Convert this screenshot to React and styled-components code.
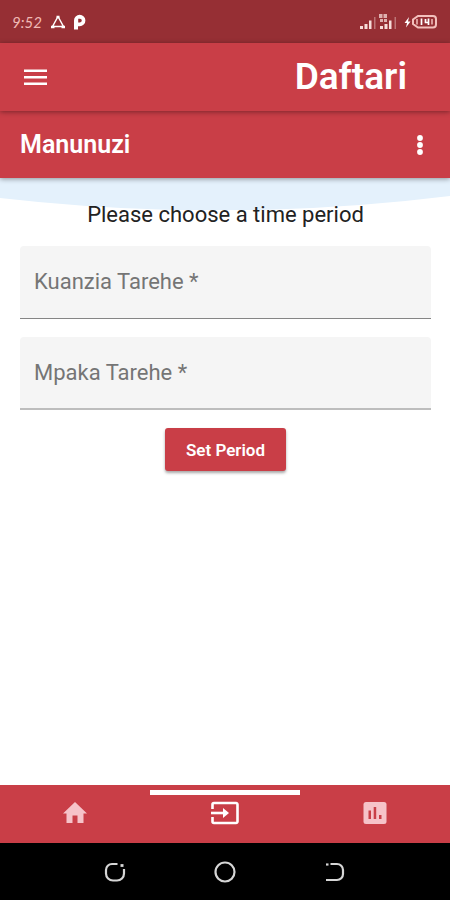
import React, { useState } from "react";
import styled, { createGlobalStyle } from "styled-components";

const GlobalStyle = createGlobalStyle`
* {
  box-sizing: border-box;
}
body {
  margin: 0;
  background: #fff;
  font-family: Roboto, sans-serif;
}
button {
  font-family: inherit;
  border: none;
  padding: 0;
  cursor: pointer;
}
`;

const Screen = styled.div`
  display: flex;
  flex-direction: column;
  min-height: 100vh;
`;

const StatusBar = styled.div`
  display: flex;
  align-items: center;
  justify-content: space-between;
  height: 43px;
  padding: 0 12px;
  background: #962f34;
  color: #f0b9b4;
`;

const StatusGroup = styled.div`
  display: flex;
  align-items: center;
  gap: ${(props) => props.$gap}px;
`;

const Clock = styled.span`
  font-family: Lato, sans-serif;
  font-style: italic;
  font-size: 15px;
  line-height: 20px;
`;

const Bar = styled.header`
  position: relative;
  z-index: ${(props) => props.$level};
  display: flex;
  align-items: center;
  justify-content: space-between;
  height: ${(props) => props.$height}px;
  padding: 0 ${(props) => props.$right}px 0 20px;
  background: #c93e47;
  color: #fff;
  box-shadow: 0 1px 5px rgba(0, 0, 0, 0.4);
`;

const IconButton = styled.button`
  display: flex;
  align-items: center;
  justify-content: center;
  height: 48px;
  background: transparent;
  color: #fff;
`;

const Brand = styled.h1`
  margin: 0;
  font-size: 37px;
  line-height: 44px;
  font-weight: 600;
`;

const PageTitle = styled.h2`
  margin: 0;
  font-size: 25px;
  line-height: 32px;
  font-weight: 600;
`;

const Content = styled.main`
  position: relative;
  flex: 1;
  padding: 24px 19px 24px 20px;
`;

const Curve = styled.svg`
  position: absolute;
  top: 0;
  left: 0;
  width: 100%;
  height: 32px;
`;

const Form = styled.form`
  position: relative;
  display: flex;
  flex-direction: column;
  gap: 18px;
`;

const Hint = styled.p`
  margin: 0;
  color: #222;
  font-size: 22px;
  line-height: 26px;
  text-align: center;
`;

const Field = styled.div`
  display: grid;
  align-items: center;
  height: 73px;
  background: #f5f5f5;
  border-bottom: ${(props) => (props.$soft ? "2px solid #bdbdbd" : "1px solid #858585")};
  border-radius: 4px 4px 0 0;

  label,
  input {
    grid-area: 1 / 1;
    font-size: 22px;
    line-height: 28px;
  }
  label {
    padding: 0 14px;
    color: #757575;
    pointer-events: none;
  }
  input {
    width: 100%;
    height: 100%;
    padding: 0 14px;
    border: none;
    outline: none;
    background: transparent;
    color: #222;
    font-family: inherit;
  }
  input:not(:placeholder-shown) + label {
    visibility: hidden;
  }
`;

const SubmitButton = styled.button`
  align-self: center;
  height: 43px;
  padding: 0 21px;
  border-radius: 3px;
  background: #c93e47;
  color: #fff;
  font-size: 17px;
  line-height: 24px;
  font-weight: 600;
  box-shadow: 0 2px 3px rgba(0, 0, 0, 0.35);
`;

const Tabs = styled.nav`
  display: grid;
  grid-template-columns: repeat(3, 1fr);
  height: 58px;
  background: #c93e47;
`;

const Tab = styled.button`
  position: relative;
  display: flex;
  align-items: center;
  justify-content: center;
  padding-bottom: 2px;
  background: transparent;
  color: ${(props) => (props.$active ? "#fff" : "#f6c3c9")};

  &::before {
    content: "";
    position: absolute;
    top: 5px;
    left: 0;
    right: 0;
    height: 5px;
    background: ${(props) => (props.$active ? "#fff" : "transparent")};
  }
`;

const SystemNav = styled.div`
  display: flex;
  align-items: center;
  justify-content: center;
  gap: 86px;
  height: 57px;
  background: #000;
`;

const SystemButton = styled.button`
  display: flex;
  background: transparent;
  color: #d6d6d6;
`;

const MenuIcon = () => (
  <svg width="30" height="24" viewBox="0 0 30 24" fill="currentColor">
    <path d="M4 4.500h23v2.600H4zM4 11h23v2.600H4zM4 17.500h23v2.600H4z" />
  </svg>
);

const MoreIcon = () => (
  <svg width="10" height="24" viewBox="0 0 10 24" fill="currentColor">
    <circle cx="5" cy="5" r="2.900" />
    <circle cx="5" cy="12" r="2.900" />
    <circle cx="5" cy="19" r="2.900" />
  </svg>
);

const AlertIcon = () => (
  <svg width="16" height="14" viewBox="0 0 16 14" fill="none" stroke="#fff" strokeWidth="1.500">
    <path d="M8 1.500L2.500 11.500M8 1.500L13.500 11.500M2.500 11.500H13.500" />
    <path d="M6.500 2h3M1 12h3.500M11.500 12H15" strokeWidth="2.400" />
  </svg>
);

const ParkIcon = () => (
  <svg width="12" height="16" viewBox="0 0 12 16" fill="#fff" fillRule="evenodd">
    <path d="M0 15.500V6.500a5.700 5.700 0 1 1 5.700 5.700H4v3.300zM4.200 4.800v3.600H6a1.800 1.800 0 0 0 0-3.600z" />
  </svg>
);

const SignalIcon = () => (
  <svg width="38" height="18" viewBox="0 0 38 18" fill="#f6dcd8">
    <path d="M1 13h3v3H1zM5.500 11h3v5h-3zM10 7.500h2.500V16H10z" />
    <path d="M15 4h1.500v12H15zM35.500 4H37v12h-1.500z" opacity="0.4" />
    <path d="M21 13h3v3h-3zM25.500 11h3v5h-3zM30 7.500h2.500V16H30z" />
    <path d="M20 1h3.500v4H20zM24.500 1H28v4h-3.500zM21 6h3v3h-3zM25 6h3v3h-3z" opacity="0.75" />
  </svg>
);

const BatteryIcon = () => (
  <svg width="34" height="16" viewBox="0 0 34 16" fill="none" stroke="#f3c0bc">
    <path d="M5 3L0.500 9H3L2 13.500L6.500 7.500H4z" fill="#fff" stroke="none" />
    <path d="M14 2H29a3 3 0 0 1 3 3v5.500a3 3 0 0 1-3 3H14L9 10V5.500z" strokeWidth="2" />
    <path d="M13 5v5.500M28 5v5.500" strokeWidth="1.500" />
    <path d="M17.500 4.500v6.500M24.500 4.500v6.500M21.500 5v3.500H25" stroke="#fff" strokeWidth="1.700" />
  </svg>
);

const HomeIcon = () => (
  <svg width="26" height="24" viewBox="0 0 26 24" fill="currentColor">
    <path d="M10.500 22v-7.500h5V22h6V12.500H25L13 1 1 12.500h3.500V22z" />
  </svg>
);

const InputIcon = () => (
  <svg width="28" height="24" viewBox="0 0 28 24" fill="none" stroke="currentColor" strokeWidth="2.600">
    <path d="M1.500 8V3.500a1.500 1.500 0 0 1 1.500-1.500H25a1.500 1.500 0 0 1 1.500 1.500v17a1.500 1.500 0 0 1-1.500 1.500H3a1.500 1.500 0 0 1-1.500-1.500V16" />
    <path d="M0 12h13" />
    <path d="M12 7l6 5-6 5z" fill="currentColor" stroke="none" />
  </svg>
);

const ChartIcon = () => (
  <svg width="24" height="24" viewBox="0 0 24 24">
    <rect x="0.500" y="1" width="23" height="22" rx="2.500" fill="currentColor" />
    <path d="M5.500 9.500H8V18H5.500zM10.700 6h2.500v12h-2.500zM16 14h2.500v4H16z" fill="#c93e47" />
  </svg>
);

const RecentIcon = () => (
  <svg width="24" height="24" viewBox="0 0 24 24" fill="none" stroke="currentColor" strokeWidth="2.200">
    <path d="M14.500 4H9a6 6 0 0 0-6 6v3.500a7 7 0 0 0 7 7h4a7 7 0 0 0 7-7V9" />
    <path d="M17.500 5.500h3" strokeWidth="2.800" />
  </svg>
);

const CircleIcon = () => (
  <svg width="24" height="24" viewBox="0 0 24 24" fill="none" stroke="currentColor" strokeWidth="2.200">
    <circle cx="12" cy="12" r="9.500" />
  </svg>
);

const BackIcon = () => (
  <svg width="24" height="24" viewBox="0 0 24 24" fill="none" stroke="currentColor" strokeWidth="2.200">
    <path d="M7.500 4H14a6 6 0 0 1 6 6v4a6 6 0 0 1-6 6H3" />
    <path d="M3 4.500h2.500" />
  </svg>
);

const tabs = [
  { id: "home", label: "Nyumbani", icon: <HomeIcon /> },
  { id: "purchases", label: "Manunuzi", icon: <InputIcon /> },
  { id: "reports", label: "Ripoti", icon: <ChartIcon /> },
];

const App = () => {
  const [from, setFrom] = useState("");
  const [to, setTo] = useState("");
  const [active, setActive] = useState("purchases");

  const handleSubmit = (event) => {
    event.preventDefault();
  };

  return (
    <Screen>
      <GlobalStyle />
      <StatusBar>
        <StatusGroup $gap={8}>
          <Clock>9:52</Clock>
          <AlertIcon />
          <ParkIcon />
        </StatusGroup>
        <StatusGroup $gap={7}>
          <SignalIcon />
          <BatteryIcon />
        </StatusGroup>
      </StatusBar>

      <Bar $height={68} $right={43} $level={2}>
        <IconButton type="button" aria-label="Menu">
          <MenuIcon />
        </IconButton>
        <Brand>Daftari</Brand>
      </Bar>
      <Bar as="div" $height={67} $right={25} $level={1}>
        <PageTitle>Manunuzi</PageTitle>
        <IconButton type="button" aria-label="More">
          <MoreIcon />
        </IconButton>
      </Bar>

      <Content>
        <Curve viewBox="0 0 450 32" preserveAspectRatio="none">
          <path d="M0 0H450V18Q225 46 0 20z" fill="#e4f1fc" />
        </Curve>
        <Form onSubmit={handleSubmit}>
          <Hint>Please choose a time period</Hint>
          <Field>
            <input
              type="text"
              id="from"
              value={from}
              placeholder=" "
              onChange={(event) => setFrom(event.target.value)}
            />
            <label htmlFor="from">Kuanzia Tarehe *</label>
          </Field>
          <Field $soft>
            <input
              type="text"
              id="to"
              value={to}
              placeholder=" "
              onChange={(event) => setTo(event.target.value)}
            />
            <label htmlFor="to">Mpaka Tarehe *</label>
          </Field>
          <SubmitButton type="submit">Set Period</SubmitButton>
        </Form>
      </Content>

      <Tabs>
        {tabs.map((tab) => (
          <Tab
            key={tab.id}
            type="button"
            aria-label={tab.label}
            $active={active === tab.id}
            onClick={() => setActive(tab.id)}
          >
            {tab.icon}
          </Tab>
        ))}
      </Tabs>
      <SystemNav>
        <SystemButton type="button" aria-label="Recent"><RecentIcon /></SystemButton>
        <SystemButton type="button" aria-label="Home"><CircleIcon /></SystemButton>
        <SystemButton type="button" aria-label="Back"><BackIcon /></SystemButton>
      </SystemNav>
    </Screen>
  );
};

export default App;
